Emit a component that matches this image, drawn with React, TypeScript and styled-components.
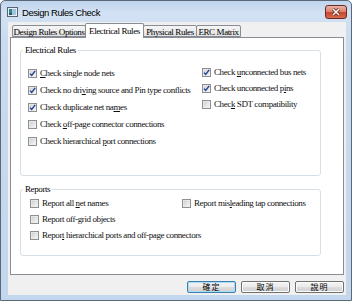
import React from 'react';
import styled, { createGlobalStyle } from 'styled-components';

const Global = createGlobalStyle`
  html, body { margin: 0; padding: 0; width: 352px; height: 301px; overflow: hidden; background: #fff; }
  #root { width: 352px; height: 301px; }
`;

const Window = styled.div`
  box-sizing: border-box;
  width: 352px;
  height: 301px;
  border: 1px solid #5d6877;
  border-radius: 5px 5px 0 0;
  background: linear-gradient(180deg, #bfd4ed 0px, #d3e2f4 12px, #c9dbf0 40px, #c2d6ee 100%);
  display: flex;
  flex-direction: column;
  padding: 0 5px 5px 7px;
`;

const TitleBar = styled.div`
  height: 21px;
  margin: 0 -5px 0 -7px;
  padding: 0 4px 0 6px;
  display: flex;
  align-items: flex-start;
  flex-shrink: 0;
`;

const TitleIcon = styled.svg`
  margin-top: 6px;
  width: 11px;
  height: 10px;
  flex-shrink: 0;
`;

const TitleText = styled.span`
  margin: 5px 0 0 4px;
  font: 9.5px/14px "Liberation Sans", Arial, sans-serif;
  letter-spacing: -0.45px;
  color: #000;
  flex: 1;
`;

const CloseButton = styled.div`
  margin-top: 4px;
  box-sizing: border-box;
  width: 22px;
  height: 14px;
  border: 1px solid #6b2b21;
  border-radius: 3px;
  background: linear-gradient(180deg, #eab2a5 0%, #dd8571 45%, #c7452b 55%, #d76c50 100%);
  display: flex;
  align-items: center;
  justify-content: center;
`;

const Client = styled.div`
  flex: 1;
  background: #f0f0f0;
  display: flex;
  flex-direction: column;
  padding: 1px 2px 2px 2px;
`;

const TabStrip = styled.div`
  height: 14px;
  display: flex;
  align-items: flex-end;
  padding-left: 2px;
  position: relative;
  z-index: 1;
`;

const Tab = styled.div<{ $w: number; $active?: boolean }>`
  box-sizing: border-box;
  width: ${p => p.$w}px;
  height: ${p => (p.$active ? 15 : 12)}px;
  margin-bottom: ${p => (p.$active ? -1 : 0)}px;
  margin-right: -1px;
  border: 1px solid #898c95;
  border-bottom: ${p => (p.$active ? 'none' : '1px solid #898c95')};
  border-radius: 2px 2px 0 0;
  background: ${p => (p.$active ? '#fff' : 'linear-gradient(180deg, #f6f6f6 0%, #ececec 50%, #e2e2e2 100%)')};
  display: flex;
  align-items: center;
  justify-content: center;
  font: 9px/10px "Liberation Serif", "Times New Roman", serif;
  letter-spacing: -0.4px;
  color: #000;
  white-space: nowrap;
  padding-top: ${p => (p.$active ? 0 : 1)}px;
`;

const Panel = styled.div`
  box-sizing: border-box;
  height: 238px;
  border: 1px solid #898c95;
  background: #fff;
  padding: 7px 0 0 9px;
`;

const Group = styled.fieldset<{ $h: number; $mt?: number }>`
  box-sizing: border-box;
  margin: ${p => p.$mt ?? 0}px 0 0 0;
  width: 301px;
  height: ${p => p.$h}px;
  min-width: 0;
  padding: 0;
  border: 1px solid #d5dfe5;
  border-radius: 3px;
`;

const Legend = styled.legend`
  margin-left: 2px;
  padding: 0 2px;
  font: 9px/10px "Liberation Serif", "Times New Roman", serif;
  letter-spacing: -0.4px;
  color: #000;
`;

const Columns = styled.div<{ $pt: number; $pl: number; $left: number }>`
  display: grid;
  grid-template-columns: ${p => p.$left}px 1fr;
  padding: ${p => p.$pt}px 0 0 ${p => p.$pl}px;
  align-items: start;
`;

const Column = styled.div<{ $gap: number; $mt?: number }>`
  display: flex;
  flex-direction: column;
  gap: ${p => p.$gap}px;
  margin-top: ${p => p.$mt ?? 0}px;
`;

const Row = styled.label`
  height: 14px;
  display: flex;
  align-items: center;
  gap: 3px;
  font: 9px/14px "Liberation Serif", "Times New Roman", serif;
  letter-spacing: -0.4px;
  color: #111;
  white-space: nowrap;
`;

const BoxSvg = styled.svg`
  width: 9px;
  height: 9px;
  flex-shrink: 0;
`;

const Buttons = styled.div`
  margin-top: 6px;
  display: flex;
  justify-content: flex-end;
  gap: 5px;
`;

const Button = styled.div<{ $default?: boolean }>`
  box-sizing: border-box;
  width: 49px;
  height: 12px;
  border: 1px solid ${p => (p.$default ? '#3c7fb1' : '#707070')};
  border-radius: 2px;
  background: linear-gradient(180deg, #f4f4f4 0%, #ebebeb 48%, #dddddd 52%, #cfcfcf 100%);
  box-shadow: ${p => (p.$default ? 'inset 0 0 0 1px #a8dcf5' : 'inset 0 0 0 1px #fcfcfc')};
  display: flex;
  align-items: center;
  justify-content: center;
  font: 8px/10px "Noto Sans CJK TC", "Noto Sans", sans-serif;
  letter-spacing: 1px;
  color: #000;
`;

function Box({ checked }: { checked?: boolean }) {
  return (
    <BoxSvg viewBox="0 0 9 9">
      <defs>
        <linearGradient id="cbg" x1="0" y1="0" x2="1" y2="1">
          <stop offset="0" stopColor="#cfcfcf" />
          <stop offset="1" stopColor="#f7f7f7" />
        </linearGradient>
      </defs>
      <rect x="0.5" y="0.5" width="8" height="8" fill="#fff" stroke="#8e8f8f" />
      <rect x="1.5" y="1.5" width="6" height="6" fill="url(#cbg)" stroke="#e2e2e2" strokeWidth="0.5" />
      {checked && <path d="M2 4.6 L3.7 6.5 L7.2 1.8" fill="none" stroke="#1f3f95" strokeWidth="1.4" />}
    </BoxSvg>
  );
}

function Check({ checked, children }: { checked?: boolean; children: React.ReactNode }) {
  return (
    <Row>
      <Box checked={checked} />
      <span>{children}</span>
    </Row>
  );
}

export default function App() {
  return (
    <>
      <Global />
      <Window>
        <TitleBar>
          <TitleIcon viewBox="0 0 11 10">
            <rect x="0.5" y="0.5" width="10" height="9" fill="#e8eef4" stroke="#5a6470" />
            <rect x="2" y="2" width="3" height="4" fill="#2b8c84" />
            <rect x="5" y="2" width="4" height="6" fill="#9fc4dc" />
            <rect x="2" y="6" width="3" height="2" fill="#26566e" />
          </TitleIcon>
          <TitleText>Design Rules Check</TitleText>
          <CloseButton>
            <svg width="10" height="8" viewBox="0 0 10 8">
              <path d="M2 1 L8 7 M8 1 L2 7" stroke="#5a1a10" strokeWidth="3" />
              <path d="M2 1 L8 7 M8 1 L2 7" stroke="#fff" strokeWidth="1.6" />
            </svg>
          </CloseButton>
        </TitleBar>
        <Client>
          <TabStrip>
            <Tab $w={74}>Design Rules Options</Tab>
            <Tab $w={59} $active>Electrical Rules</Tab>
            <Tab $w={54}>Physical Rules</Tab>
            <Tab $w={45}>ERC Matrix</Tab>
          </TabStrip>
          <Panel>
            <Group $h={131}>
              <Legend>Electrical Rules</Legend>
              <Columns $pt={11} $pl={7} $left={174}>
                <Column $gap={3}>
                  <Check checked><u>C</u>heck single node nets</Check>
                  <Check checked>Check no dri<u>v</u>ing source and Pin type conflicts</Check>
                  <Check checked>Check duplicate net na<u>m</u>es</Check>
                  <Check>Check <u>o</u>ff-page connector connections</Check>
                  <Check>Check hierarchical <u>p</u>ort connections</Check>
                </Column>
                <Column $gap={2} $mt={-1}>
                  <Check checked>Check <u>u</u>nconnected bus nets</Check>
                  <Check checked>Check unconnected p<u>i</u>ns</Check>
                  <Check>Chec<u>k</u> SDT compatibility</Check>
                </Column>
              </Columns>
            </Group>
            <Group $h={72} $mt={8}>
              <Legend>Reports</Legend>
              <Columns $pt={2} $pl={9} $left={152}>
                <Column $gap={2}>
                  <Check>Report all <u>n</u>et names</Check>
                  <Check>Report off-<u>g</u>rid objects</Check>
                  <Check>Repor<u>t</u> hierarchical ports and off-page connectors</Check>
                </Column>
                <Column $gap={2}>
                  <Check>Report mis<u>l</u>eading tap connections</Check>
                </Column>
              </Columns>
            </Group>
          </Panel>
          <Buttons>
            <Button $default>確定</Button>
            <Button>取消</Button>
            <Button>說明</Button>
          </Buttons>
        </Client>
      </Window>
    </>
  );
}
